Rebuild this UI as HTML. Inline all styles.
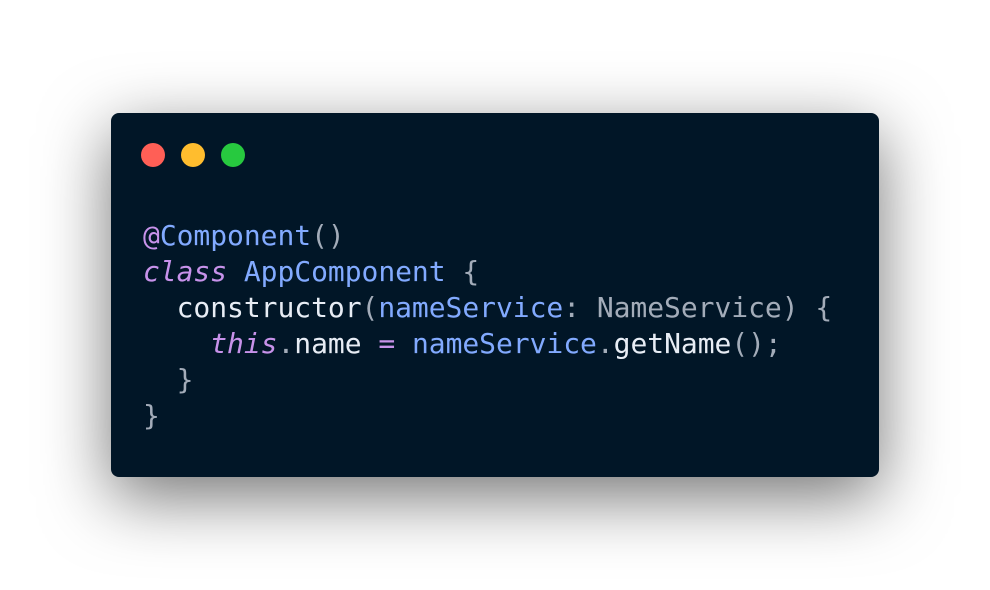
<!DOCTYPE html>
<html><head><style>
html,body{margin:0;padding:0;width:990px;height:590px;background:#fff;overflow:hidden}
.win{position:absolute;left:111px;top:113px;width:768px;height:364px;background:#011627;border-radius:8px;box-shadow:0 20px 68px rgba(0,0,0,0.55)}
.dot{position:absolute;top:30px;width:24px;height:24px;border-radius:50%}
pre{position:absolute;left:32px;top:105px;margin:0;font-family:"DejaVu Sans Mono","Liberation Mono",monospace;font-size:28px;line-height:36px;color:#e8edf5;letter-spacing:-0.05px}
.b{color:#82aaff}.p{color:#c792ea}.i{font-style:italic;color:#c792ea}.g{color:#a3acb9}
</style></head><body>
<div class="win">
<div class="dot" style="left:30px;background:#ff5f56"></div>
<div class="dot" style="left:70px;background:#ffbd2e"></div>
<div class="dot" style="left:110px;background:#27c93f"></div>
<pre><span class="p">@</span><span class="b">Component</span><span class="g">()</span>
<span class="i">class</span> <span class="b">AppComponent</span> <span class="g">{</span>
  constructor<span class="g">(</span><span class="b">nameService</span><span class="g">: NameService) {</span>
    <span class="i">this</span><span class="g">.</span>name <span class="p">=</span> <span class="b">nameService</span><span class="g">.</span>getName<span class="g">();</span>
  <span class="g">}</span>
<span class="g">}</span></pre>
</div>
</body></html>
